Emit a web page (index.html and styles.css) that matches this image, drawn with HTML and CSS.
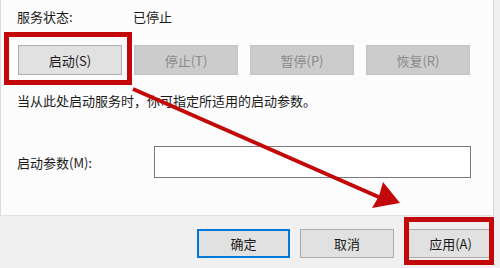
FILE: index.html
```html
<!DOCTYPE html>
<html lang="zh-CN">
<head>
<meta charset="utf-8">
<link rel="stylesheet" href="styles.css">
</head>
<body>
<div class="dialog">
  <div class="panel">
    <div class="status-row">
      <span class="label">服务状态:</span>
      <span class="value">已停止</span>
    </div>
    <div class="btn-row">
      <button class="btn">启动(S)</button>
      <button class="btn disabled">停止(T)</button>
      <button class="btn disabled">暂停(P)</button>
      <button class="btn disabled">恢复(R)</button>
    </div>
    <p class="desc">当从此处启动服务时，你可指定所适用的启动参数。</p>
    <div class="param-row">
      <span class="param-label">启动参数(M):</span>
      <span class="input"></span>
    </div>
  </div>
  <div class="footer">
    <button class="btn fbtn default">确定</button>
    <button class="btn fbtn cancel">取消</button>
    <button class="btn fbtn apply">应用(A)</button>
  </div>
  <svg class="annot" width="500" height="268" viewBox="0 0 500 268">
    <rect x="6.5" y="34.5" width="123" height="48" fill="none" stroke="#c20808" stroke-width="5"/>
    <rect x="406.5" y="219.5" width="85" height="43" fill="none" stroke="#c20808" stroke-width="5"/>
    <line x1="133" y1="89" x2="381" y2="198" stroke="#c20808" stroke-width="4"/>
    <polygon points="400,203 383,182 379,196 372,208" fill="#c20808"/>
  </svg>
</div>
</body>
</html>
```

FILE: styles.css
```css
* { box-sizing: border-box; }
html, body { margin: 0; padding: 0; }
body {
  width: 500px;
  height: 268px;
  overflow: hidden;
  background: #f0f0f0;
  font-family: "Noto Sans CJK SC", "Noto Sans", sans-serif;
  font-size: 13px;
  color: #1a1a1a;
}
.dialog {
  position: relative;
  width: 500px;
  height: 268px;
}
.panel {
  width: 494px;
  height: 216px;
  background: #fcfcfc;
  border-left: 1px solid #dcdcdc;
  border-right: 1px solid #d6d6d6;
  border-bottom: 1px solid #e2e2e2;
  padding: 7px 0 0 16px;
  display: flex;
  flex-direction: column;
}
.status-row {
  display: flex;
  height: 20px;
  line-height: 20px;
}
.label { width: 116px; }
.btn-row {
  display: flex;
  gap: 12px;
  margin: 18px 0 0 1px;
}
.btn {
  font-family: inherit;
  font-size: 13px;
  color: #1a1a1a;
  width: 104px;
  height: 30px;
  background: #e1e1e1;
  border: 1px solid #adadad;
  border-radius: 0;
  padding: 0;
  margin: 0;
}
.btn.disabled {
  background: #cccccc;
  border-color: #c4c4c4;
  color: #8a8a8a;
}
.desc {
  margin: 16px 0 0 0;
  height: 20px;
  line-height: 20px;
}
.param-row {
  display: flex;
  align-items: center;
  margin-top: 35px;
}
.param-label { width: 137px; }
.input {
  width: 317px;
  height: 32px;
  background: #ffffff;
  border: 1px solid #7a7a7a;
}
.footer {
  display: flex;
  padding: 13px 0 0 197px;
}
.fbtn {
  height: 29px;
  width: 93px;
}
.fbtn.default {
  border: 2px solid #0078d7;
}
.fbtn.cancel {
  width: 94px;
  margin-left: 10px;
}
.fbtn.apply {
  width: 87px;
  margin-left: 13px;
}
.annot {
  position: absolute;
  left: 0;
  top: 0;
  pointer-events: none;
}
```
